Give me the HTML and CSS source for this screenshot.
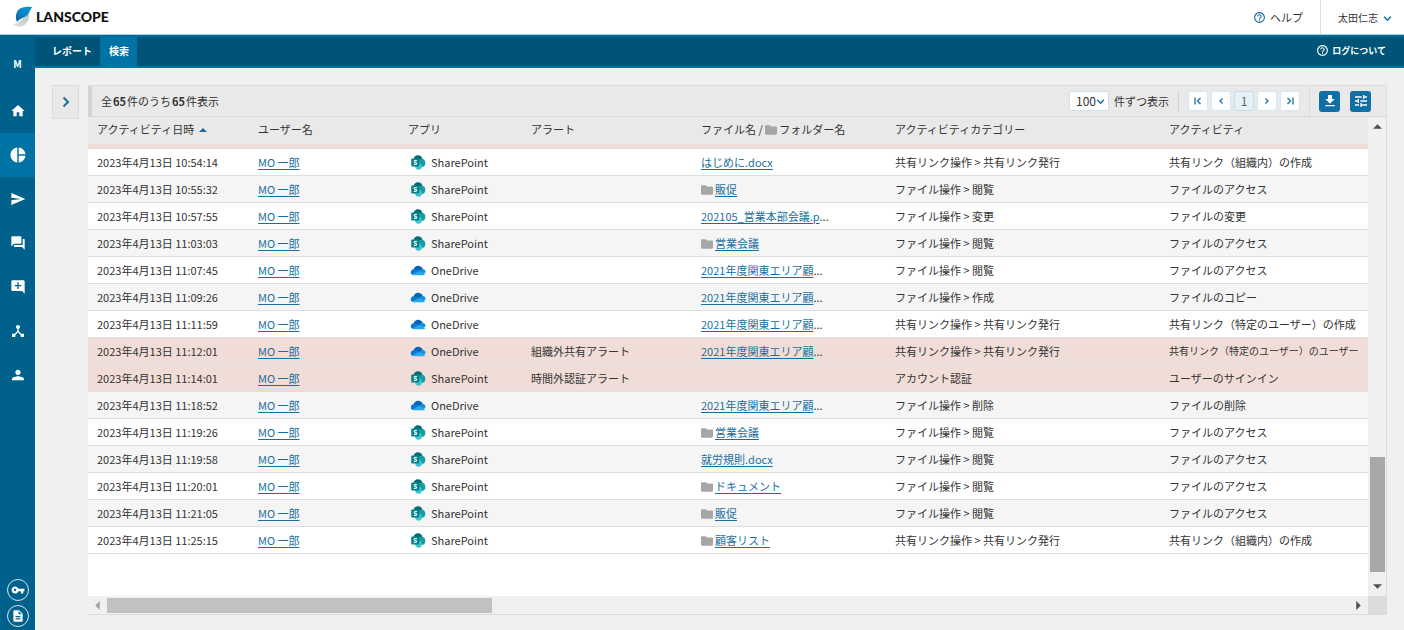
FILE: index.html
```html
<!DOCTYPE html>
<html lang="ja">
<head>
<meta charset="utf-8">
<title>LANSCOPE</title>
<link rel="stylesheet" href="styles.css">
</head>
<body>
<svg class="defs" aria-hidden="true">
  <linearGradient id="lg-blue" x1="0" y1="1" x2="1" y2="0"><stop offset="0" stop-color="#0a5f92"/><stop offset=".4" stop-color="#0b80be"/><stop offset="1" stop-color="#1296d8"/></linearGradient>
  <linearGradient id="lg-gray" x1="0" y1="1" x2="1" y2="0"><stop offset="0" stop-color="#dde4dc"/><stop offset="1" stop-color="#b5c5c6"/></linearGradient>
  <symbol id="folder" viewBox="2 4 20 16"><path d="M10 4H4c-1.100 0-2 .9-2 2v12c0 1.100.9 2 2 2h16c1.100 0 2-.9 2-2V8c0-1.100-.9-2-2-2h-8l-2-2z"/></symbol>
  <symbol id="help" viewBox="0 0 24 24"><path d="M11 18h2v-2h-2v2zm1-16C6.480 2 2 6.480 2 12s4.480 10 10 10 10-4.480 10-10S17.520 2 12 2zm0 18c-4.410 0-8-3.590-8-8s3.590-8 8-8 8 3.590 8 8-3.590 8-8 8zm0-14c-2.210 0-4 1.790-4 4h2c0-1.100.9-2 2-2s2 .9 2 2c0 2-3 1.750-3 5h2c0-2.250 3-2.500 3-5 0-2.210-1.790-4-4-4z"/></symbol>
  <symbol id="chev-down" viewBox="0 0 8 8"><path d="M1 2.500l3 3 3-3" fill="none" stroke="currentColor" stroke-width="1.400"/></symbol>
  <symbol id="sharepoint" viewBox="0 0 16 16">
    <circle cx="8" cy="5" r="4.800" fill="#036c70"/><circle cx="11.500" cy="8.400" r="4.300" fill="#1a9ba1"/><circle cx="8.600" cy="12" r="3.600" fill="#37c6d0"/>
    <rect x=".8" y="3.800" width="8.400" height="8.400" rx=".8" fill="#03828a"/>
    <path d="M6.800 6.100C6 5.600 3.800 5.600 3.900 6.900c.1 1.200 2.700.8 2.700 2.100 0 1.300-2.100 1.200-3 .6" fill="none" stroke="#fff" stroke-width="1.200"/>
  </symbol>
  <symbol id="onedrive" viewBox="0 0 16 11">
    <path d="M3.500 4.500C4.500 1.500 7 .4 9.300 1c1.800.4 3 1.600 3.500 3L9.500 6.500z" fill="#0364b8"/>
    <path d="M.8 7.800C.6 5.500 2.400 3.900 4.600 4L10 7 6 10H3.200C1.700 9.900.9 9 .8 7.800z" fill="#0a78d4"/>
    <path d="M9 6.400c.8-1.600 2-2.500 3.600-2.500 2 .1 3.100 1.700 2.900 3.500L12 9z" fill="#1490df"/>
    <path d="M2 9.600L9 5.900l6.300 3c-.5.900-1.400 1.400-2.500 1.400H3.800c-.8 0-1.400-.2-1.800-.7z" fill="#28a8ea"/>
  </symbol>
</svg>

<header class="topbar">
  <a class="logo" href="#">
    <svg width="20" height="22" viewBox="0 0 20 22" aria-hidden="true">
      <path d="M.5 18.500C3 16.500 5 17.500 8 14.500c2.500-2.500 4-5.500 8-7.500 1 7-3.500 13.600-9.500 13.700-2.500 0-4.800-.9-6-2.200z" fill="url(#lg-gray)"/>
      <path d="M4 16C1.500 9.500 3.500 3.500 9 1.700 12 .7 16 .6 19.300 1.300 17.300 3.300 17 6 14.800 8.500 11.500 12 7.500 11.800 4 16z" fill="url(#lg-blue)"/>
    </svg>
    <span>LANSCOPE</span>
  </a>
  <div class="top-links">
    <a class="help-link" href="#"><svg class="i-help"><use href="#help"/></svg>ヘルプ</a>
    <button class="user" type="button">太田仁志<svg class="i-chev"><use href="#chev-down"/></svg></button>
  </div>
</header>

<div class="shell">
  <nav class="side" aria-label="メイン">
    <div class="side-mark">M</div>
    <a class="side-item" href="#" aria-label="ホーム"><svg viewBox="0 0 24 24"><path d="M10 20v-6h4v6h5v-8h3L12 3 2 12h3v8z"/></svg></a>
    <a class="side-item active" href="#" aria-label="レポート"><svg class="pie" viewBox="0 0 24 24"><path d="M11 2v20c-5.070-.5-9-4.790-9-10s3.930-9.500 9-10zm2 0v9h9c-.5-4.700-4.300-8.500-9-9zm0 11v9c4.700-.5 8.500-4.300 9-9h-9z"/></svg></a>
    <a class="side-item" href="#" aria-label="送信"><svg viewBox="0 0 24 24"><path d="M2 21l21-9L2 3v7l15 2-15 2z"/></svg></a>
    <a class="side-item" href="#" aria-label="チャット"><svg viewBox="0 0 24 24"><path d="M21 6h-2v9H6v2c0 .6.400 1 1 1h11l4 4V7c0-.6-.4-1-1-1zm-4 6V3c0-.6-.4-1-1-1H3c-.6 0-1 .4-1 1v14l4-4h10c.6 0 1-.4 1-1z"/></svg></a>
    <a class="side-item" href="#" aria-label="追加"><svg viewBox="0 0 24 24"><path d="M22 4c0-1.100-.9-2-2-2H4c-1.100 0-2 .9-2 2v12c0 1.100.9 2 2 2h14l4 4V4zM17 11h-4v4h-2v-4H7V9h4V5h2v4h4v2z"/></svg></a>
    <a class="side-item" href="#" aria-label="連携"><svg viewBox="0 0 24 24"><path d="M17 16l-4-4V8.820C14.160 8.400 15 7.300 15 6c0-1.660-1.340-3-3-3S9 4.340 9 6c0 1.300.840 2.400 2 2.820V12l-4 4H3v5h5v-3.050l4-4.200 4 4.200V21h5v-5h-4z"/></svg></a>
    <a class="side-item" href="#" aria-label="ユーザー"><svg viewBox="0 0 24 24"><path d="M12 12c2.210 0 4-1.790 4-4s-1.790-4-4-4-4 1.790-4 4 1.790 4 4 4zm0 2c-2.670 0-9 1.340-9 4v2h18v-2c0-2.660-6.330-4-9-4z"/></svg></a>
    <div class="side-foot">
      <a class="round" href="#" aria-label="キー"><svg viewBox="0 0 24 24"><path d="M12.650 10C11.830 7.670 9.610 6 7 6c-3.310 0-6 2.690-6 6s2.690 6 6 6c2.610 0 4.830-1.670 5.650-4H17v4h4v-4h2v-4H12.650zM7 14c-1.100 0-2-.9-2-2s.9-2 2-2 2 .9 2 2-.9 2-2 2z"/></svg></a>
      <a class="round" href="#" aria-label="文書"><svg viewBox="0 0 24 24"><path d="M14 2H6c-1.100 0-2 .9-2 2v16c0 1.100.9 2 2 2h12c1.100 0 2-.9 2-2V8l-6-6zm2 16H8v-2h8v2zm0-4H8v-2h8v2zm-3-5V3.500L18.500 9H13z"/></svg></a>
    </div>
  </nav>

  <div class="page">
    <nav class="tabs" aria-label="表示">
      <a class="tab" href="#">レポート</a>
      <a class="tab active" href="#">検索</a>
      <a class="about" href="#"><svg class="i-help"><use href="#help"/></svg>ログについて</a>
    </nav>

    <main class="content">
      <button class="expand" type="button" aria-label="検索条件を開く"><svg width="8" height="12" viewBox="0 0 8 12"><path d="M1.500 1.500L6 6l-4.500 4.500" fill="none" stroke="currentColor" stroke-width="2"/></svg></button>

      <section class="panel">
        <div class="toolbar">
          <p class="count">全<b>65</b>件のうち<b>65</b>件表示</p>
          <div class="per-page">
            <span class="select-box"><select id="per"><option>100</option></select><svg class="i-chev"><use href="#chev-down"/></svg></span>
            <label for="per">件ずつ表示</label>
          </div>
          <div class="pager">
            <button type="button" aria-label="最初"><svg viewBox="0 0 10 10"><path d="M2 1.500v7M7.500 2L4.500 5l3 3"/></svg></button>
            <button type="button" aria-label="前"><svg viewBox="0 0 10 10"><path d="M6.500 2.500L4 5l2.500 2.500"/></svg></button>
            <button type="button" class="current">1</button>
            <button type="button" aria-label="次"><svg viewBox="0 0 10 10"><path d="M3.500 2.500L6 5 3.500 7.500"/></svg></button>
            <button type="button" aria-label="最後"><svg viewBox="0 0 10 10"><path d="M8 1.500v7M2.500 2l3 3-3 3"/></svg></button>
          </div>
          <div class="actions">
            <button type="button" aria-label="ダウンロード"><svg viewBox="0 0 24 24"><path d="M19 9h-4V3H9v6H5l7 7 7-7zM5 18v2h14v-2H5z"/></svg></button>
            <button type="button" aria-label="表示設定"><svg viewBox="0 0 24 24"><path d="M3 17v2h6v-2H3zM3 5v2h10V5H3zm10 16v-2h8v-2h-8v-2h-2v6h2zM7 9v2H3v2h4v2h2V9H7zm14 4v-2H11v2h10zm-6-4h2V7h4V5h-4V3h-2v6z"/></svg></button>
          </div>
        </div>

        <div class="grid">
          <div class="view">
            <table>
              <colgroup><col class="c-date"><col class="c-user"><col class="c-app"><col class="c-alert"><col class="c-file"><col class="c-cat"><col></colgroup>
              <thead>
                <tr><th>アクティビティ日時<svg class="sort" viewBox="0 0 8 4"><path d="M0 4l4-4 4 4z"/></svg></th><th>ユーザー名</th><th>アプリ</th><th>アラート</th><th>ファイル名 / <svg class="folder"><use href="#folder"/></svg>フォルダー名</th><th>アクティビティカテゴリー</th><th>アクティビティ</th></tr>
              </thead>
              <tbody>
                <tr class="peek"><td colspan="7"></td></tr>
                <tr><td>2023年4月13日 10:54:14</td><td><a href="#">MO 一郎</a></td><td><svg class="app"><use href="#sharepoint"/></svg>SharePoint</td><td></td><td><a href="#">はじめに.docx</a></td><td>共有リンク操作 &gt; 共有リンク発行</td><td>共有リンク（組織内）の作成</td></tr>
                <tr class="alt"><td>2023年4月13日 10:55:32</td><td><a href="#">MO 一郎</a></td><td><svg class="app"><use href="#sharepoint"/></svg>SharePoint</td><td></td><td><svg class="folder"><use href="#folder"/></svg><a href="#">販促</a></td><td>ファイル操作 &gt; 閲覧</td><td>ファイルのアクセス</td></tr>
                <tr><td>2023年4月13日 10:57:55</td><td><a href="#">MO 一郎</a></td><td><svg class="app"><use href="#sharepoint"/></svg>SharePoint</td><td></td><td><a href="#">202105_営業本部会議.p</a>...</td><td>ファイル操作 &gt; 変更</td><td>ファイルの変更</td></tr>
                <tr class="alt"><td>2023年4月13日 11:03:03</td><td><a href="#">MO 一郎</a></td><td><svg class="app"><use href="#sharepoint"/></svg>SharePoint</td><td></td><td><svg class="folder"><use href="#folder"/></svg><a href="#">営業会議</a></td><td>ファイル操作 &gt; 閲覧</td><td>ファイルのアクセス</td></tr>
                <tr><td>2023年4月13日 11:07:45</td><td><a href="#">MO 一郎</a></td><td><svg class="app"><use href="#onedrive"/></svg>OneDrive</td><td></td><td><a href="#">2021年度関東エリア顧</a>...</td><td>ファイル操作 &gt; 閲覧</td><td>ファイルのアクセス</td></tr>
                <tr class="alt"><td>2023年4月13日 11:09:26</td><td><a href="#">MO 一郎</a></td><td><svg class="app"><use href="#onedrive"/></svg>OneDrive</td><td></td><td><a href="#">2021年度関東エリア顧</a>...</td><td>ファイル操作 &gt; 作成</td><td>ファイルのコピー</td></tr>
                <tr><td>2023年4月13日 11:11:59</td><td><a href="#">MO 一郎</a></td><td><svg class="app"><use href="#onedrive"/></svg>OneDrive</td><td></td><td><a href="#">2021年度関東エリア顧</a>...</td><td>共有リンク操作 &gt; 共有リンク発行</td><td>共有リンク（特定のユーザー）の作成</td></tr>
                <tr class="warn"><td>2023年4月13日 11:12:01</td><td><a href="#">MO 一郎</a></td><td><svg class="app"><use href="#onedrive"/></svg>OneDrive</td><td>組織外共有アラート</td><td><a href="#">2021年度関東エリア顧</a>...</td><td>共有リンク操作 &gt; 共有リンク発行</td><td class="long">共有リンク（特定のユーザー）のユーザー</td></tr>
                <tr class="warn"><td>2023年4月13日 11:14:01</td><td><a href="#">MO 一郎</a></td><td><svg class="app"><use href="#sharepoint"/></svg>SharePoint</td><td>時間外認証アラート</td><td></td><td>アカウント認証</td><td>ユーザーのサインイン</td></tr>
                <tr class="alt"><td>2023年4月13日 11:18:52</td><td><a href="#">MO 一郎</a></td><td><svg class="app"><use href="#onedrive"/></svg>OneDrive</td><td></td><td><a href="#">2021年度関東エリア顧</a>...</td><td>ファイル操作 &gt; 削除</td><td>ファイルの削除</td></tr>
                <tr><td>2023年4月13日 11:19:26</td><td><a href="#">MO 一郎</a></td><td><svg class="app"><use href="#sharepoint"/></svg>SharePoint</td><td></td><td><svg class="folder"><use href="#folder"/></svg><a href="#">営業会議</a></td><td>ファイル操作 &gt; 閲覧</td><td>ファイルのアクセス</td></tr>
                <tr class="alt"><td>2023年4月13日 11:19:58</td><td><a href="#">MO 一郎</a></td><td><svg class="app"><use href="#sharepoint"/></svg>SharePoint</td><td></td><td><a href="#">就労規則.docx</a></td><td>ファイル操作 &gt; 閲覧</td><td>ファイルのアクセス</td></tr>
                <tr><td>2023年4月13日 11:20:01</td><td><a href="#">MO 一郎</a></td><td><svg class="app"><use href="#sharepoint"/></svg>SharePoint</td><td></td><td><svg class="folder"><use href="#folder"/></svg><a href="#">ドキュメント</a></td><td>ファイル操作 &gt; 閲覧</td><td>ファイルのアクセス</td></tr>
                <tr class="alt"><td>2023年4月13日 11:21:05</td><td><a href="#">MO 一郎</a></td><td><svg class="app"><use href="#sharepoint"/></svg>SharePoint</td><td></td><td><svg class="folder"><use href="#folder"/></svg><a href="#">販促</a></td><td>ファイル操作 &gt; 閲覧</td><td>ファイルのアクセス</td></tr>
                <tr><td>2023年4月13日 11:25:15</td><td><a href="#">MO 一郎</a></td><td><svg class="app"><use href="#sharepoint"/></svg>SharePoint</td><td></td><td><svg class="folder"><use href="#folder"/></svg><a href="#">顧客リスト</a></td><td>共有リンク操作 &gt; 共有リンク発行</td><td>共有リンク（組織内）の作成</td></tr>
              </tbody>
            </table>
          </div>
          <div class="vbar">
            <svg class="arrow" viewBox="0 0 8 8"><path d="M0 6l4-4 4 4z"/></svg>
            <div class="vtrack"><div class="vthumb"></div></div>
            <svg class="arrow" viewBox="0 0 8 8"><path d="M0 2l4 4 4-4z"/></svg>
          </div>
          <div class="hbar">
            <svg class="arrow off" viewBox="0 0 8 8"><path d="M6 0L2 4l4 4z"/></svg>
            <div class="htrack"><div class="hthumb"></div></div>
            <svg class="arrow" viewBox="0 0 8 8"><path d="M2 0l4 4-4 4z"/></svg>
          </div>
          <div class="corner"></div>
        </div>
      </section>
    </main>
  </div>
</div>
</body>
</html>
```
FILE: styles.css
```css
* { box-sizing: border-box; }
body {
  margin: 0;
  min-height: 100vh;
  display: flex;
  flex-direction: column;
  background: #f0f0f0;
  color: #333;
  font: 11px/16px "Noto Sans CJK JP", sans-serif;
}
a { color: #1a6f9f; }
button, select { font: inherit; margin: 0; padding: 0; border: 0; background: none; color: inherit; }
svg { fill: currentColor; flex: none; }
.defs { position: absolute; width: 0; height: 0; }

.topbar {
  display: flex;
  justify-content: space-between;
  height: 35px;
  background: #fff;
  border-bottom: 1px solid #a9cfe2;
}
.logo {
  display: flex;
  align-items: center;
  gap: 3px;
  padding-left: 13px;
  color: #111;
  font: 900 14px/20px Lato, sans-serif;
  text-decoration: none;
}
.top-links { display: flex; }
.help-link, .user, .about { display: flex; align-items: center; gap: 4px; text-decoration: none; }
.help-link { padding: 0 17px 0 0; color: #333; }
.help-link svg { color: #1a6f9f; }
.user { padding: 2px 12px 0 17px; border-left: 1px solid #cde3ee; font-size: 10px; gap: 5px; }
.i-help { width: 13px; height: 13px; }
.i-chev { width: 9px; height: 9px; color: #1a6f9f; }

.shell { flex: 1; display: flex; }
.side {
  width: 35px;
  display: flex;
  flex-direction: column;
  background: #00628c;
  color: #fff;
}
.side-mark { height: 54px; padding-top: 21px; text-align: center; font-size: 10px; font-weight: 700; }
.side-item { height: 44px; display: flex; align-items: center; justify-content: center; color: #fff; }
.side-item svg { width: 16px; height: 16px; }
.side-item svg.pie { width: 18px; height: 18px; }
.side-item.active { background: #0072a3; }
.side-foot { margin-top: auto; padding-bottom: 3px; display: flex; flex-direction: column; align-items: center; gap: 4px; }
.round {
  width: 22px;
  height: 22px;
  display: flex;
  align-items: center;
  justify-content: center;
  border: 1px solid #d5e6ee;
  border-radius: 50%;
  color: #fff;
}
.round svg { width: 14px; height: 14px; }

.page { flex: 1; min-width: 0; display: flex; flex-direction: column; }
.tabs {
  display: flex;
  height: 33px;
  border-top: 2px solid #006a99;
  border-bottom: 2px solid #0072a3;
  background: #005478;
  font-size: 10px;
  font-weight: 700;
}
.tab { display: flex; align-items: center; padding: 0 8px 2px; color: #fff; text-decoration: none; }
.tab:first-child { padding-left: 17px; }
.tab.active { background: #0072a3; padding-left: 9px; }
.about { margin-left: auto; padding: 0 18px 2px 0; color: #fff; font-size: 9px; gap: 3px; }

.content { flex: 1; display: flex; align-items: flex-start; gap: 9px; padding: 17px 17px 15px; }
.expand {
  width: 27px;
  height: 34px;
  display: flex;
  align-items: center;
  justify-content: center;
  background: #e9e9e9;
  border: 1px solid #dcdcdc;
  color: #1a6f9f;
}
.panel {
  flex: 1;
  align-self: stretch;
  min-width: 0;
  display: flex;
  flex-direction: column;
  border: 1px solid #dcdcdc;
  border-left: 0;
}
.toolbar {
  display: flex;
  align-items: center;
  height: 31px;
  background: #e9e9e9;
  border-left: 4px solid #d4d4d4;
  border-bottom: 1px solid #d9d9d9;
}
.count { margin: 0 auto 0 9px; }
.count b { margin: 0 1px; font-weight: 700; }
.per-page { display: flex; align-items: center; gap: 5px; padding-right: 9px; }
.select-box {
  display: flex;
  align-items: center;
  width: 40px;
  height: 20px;
  padding: 0 3px 0 6px;
  background: #fff;
  border: 1px solid #cde3ee;
  border-radius: 2px;
}
.select-box select { flex: 1; min-width: 0; appearance: none; outline: 0; font-size: 12px; }
.pager { display: flex; gap: 3px; padding: 0 9px; border-left: 1px solid #d0d0d0; }
.pager button {
  width: 20px;
  height: 20px;
  display: flex;
  align-items: center;
  justify-content: center;
  background: #fff;
  border: 1px solid #d3e8f2;
  border-radius: 3px;
  color: #1a6f9f;
}
.pager .current { background: #e6f2f8; border-color: #c4dfec; color: #666; font-size: 12px; }
.pager svg { width: 10px; height: 10px; fill: none; stroke: currentColor; stroke-width: 1.3; }
.actions { display: flex; align-items: center; align-self: stretch; gap: 10px; padding: 0 15px 0 9px; border-left: 1px solid #dcdcdc; }
.actions button {
  width: 21px;
  height: 21px;
  display: flex;
  align-items: center;
  justify-content: center;
  background: #1070a5;
  border-radius: 3px;
  color: #fff;
}
.actions svg { width: 16px; height: 16px; }

.grid { flex: 1; display: grid; grid-template: 1fr 18px / minmax(0, 1fr) 18px; }
.view { overflow: hidden; background: #fff; }
table { width: 100%; table-layout: fixed; border-collapse: separate; border-spacing: 0; }
.c-date { width: 161px; }
.c-user { width: 150px; }
.c-app { width: 123px; }
.c-alert { width: 170px; }
.c-file { width: 194px; }
.c-cat { width: 274px; }
th, td { height: 27px; padding: 0 0 0 9px; text-align: left; white-space: nowrap; overflow: hidden; }
th { padding-bottom: 3px; background: #e9e9e9; font-weight: 400; }
td { border-bottom: 1px solid #dedede; }
td a { text-underline-offset: 2px; }
.alt td { background: #f5f5f5; }
.warn td { background: #f1ddd8; }
.peek td { height: 5px; background: #f1ddd8; }
td.long { font-size: 10px; }
.sort { width: 8px; height: 4px; margin-left: 5px; vertical-align: 2px; color: #1a6f9f; }
.folder { width: 12px; height: 10px; margin-right: 2px; vertical-align: -1px; color: #a6a6a6; }
.app { width: 16px; height: 15px; margin: 0 5px 0 2px; vertical-align: -3px; }

.vbar, .hbar { display: flex; align-items: center; background: #f0f0f0; }
.vbar { flex-direction: column; padding: 5px 0; }
.hbar { padding: 0 5px; gap: 5px; }
.arrow { width: 9px; height: 9px; color: #505050; }
.arrow.off { color: #a3a3a3; }
.vtrack { flex: 1; width: 15px; display: flex; flex-direction: column; justify-content: flex-end; padding-bottom: 10px; }
.vthumb { height: 26%; background: #a8a8a8; }
.htrack { flex: 1; }
.hthumb { width: 31%; height: 15px; background: #c1c1c1; }
.corner { background: #dcdcdc; }
```
